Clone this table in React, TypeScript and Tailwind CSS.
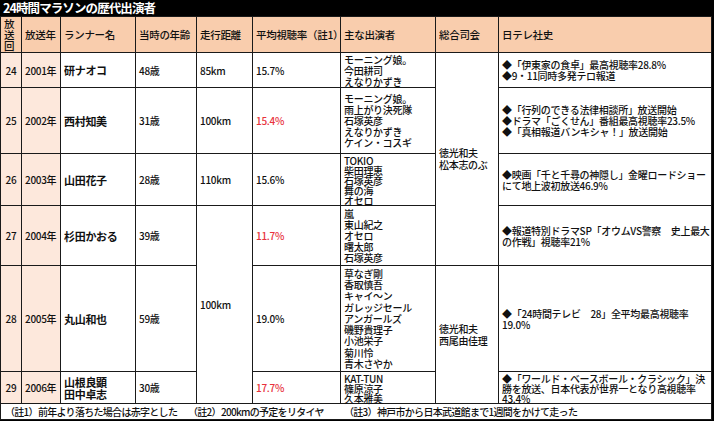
import React from "react";

type Row = {
  no: string;
  year: string;
  runner: string[];
  age: string;
  dist?: { text: string; span: number };
  rate: string;
  red?: boolean;
  cast: string[];
  castH: string;
  host?: { lines: string[]; span: number };
  hist: string[];
  h: string;
};

const rows: Row[] = [
  {
    no: "24",
    year: "2001年",
    runner: ["研ナオコ"],
    age: "48歳",
    dist: { text: "85km", span: 1 },
    rate: "15.7%",
    cast: ["モーニング娘。", "今田耕司", "えなりかずき"],
    castH: "h-[11px]",
    host: { lines: ["徳光和夫", "松本志のぶ"], span: 4 },
    hist: ["◆「伊東家の食卓」最高視聴率28.8%", "◆9・11同時多発テロ報道"],
    h: "h-[35px]",
  },
  {
    no: "25",
    year: "2002年",
    runner: ["西村知美"],
    age: "31歳",
    dist: { text: "100km", span: 1 },
    rate: "15.4%",
    red: true,
    cast: ["モーニング娘。", "雨上がり決死隊", "石塚英彦", "えなりかずき", "ケイン・コスギ"],
    castH: "h-[11px]",
    hist: [
      "◆「行列のできる法律相談所」放送開始",
      "◆ドラマ「ごくせん」番組最高視聴率23.5%",
      "◆「真相報道バンキシャ！」放送開始",
    ],
    h: "h-[66px]",
  },
  {
    no: "26",
    year: "2003年",
    runner: ["山田花子"],
    age: "28歳",
    dist: { text: "110km", span: 1 },
    rate: "15.6%",
    cast: ["TOKIO", "柴田理恵", "石塚英彦", "舞の海", "オセロ"],
    castH: "h-[10px]",
    hist: ["◆映画「千と千尋の神隠し」金曜ロードショー", "にて地上波初放送46.9%"],
    h: "h-[52px]",
  },
  {
    no: "27",
    year: "2004年",
    runner: ["杉田かおる"],
    age: "39歳",
    dist: { text: "100km", span: 3 },
    rate: "11.7%",
    red: true,
    cast: ["嵐", "東山紀之", "オセロ", "曙太郎", "石塚英彦"],
    castH: "h-[11px]",
    hist: ["◆報道特別ドラマSP「オウムVS警察　史上最大", "の作戦」視聴率21%"],
    h: "h-[60px]",
  },
  {
    no: "28",
    year: "2005年",
    runner: ["丸山和也"],
    age: "59歳",
    rate: "19.0%",
    cast: [
      "草なぎ剛",
      "香取慎吾",
      "キャイ〜ン",
      "ガレッジセール",
      "アンガールズ",
      "磯野貴理子",
      "小池栄子",
      "菊川怜",
      "青木さやか",
    ],
    castH: "h-[11.3px]",
    host: { lines: ["徳光和夫", "西尾由佳理"], span: 2 },
    hist: ["◆「24時間テレビ　28」全平均最高視聴率", "19.0%"],
    h: "h-[106px]",
  },
  {
    no: "29",
    year: "2006年",
    runner: ["山根良顕", "田中卓志"],
    age: "30歳",
    rate: "17.7%",
    red: true,
    cast: ["KAT-TUN", "篠原涼子", "久本雅美"],
    castH: "h-[10px]",
    hist: [
      "◆「ワールド・ベースボール・クラシック」決",
      "勝を放送、日本代表が世界一となり高視聴率",
      "43.4%",
    ],
    h: "h-[32px]",
  },
];

const cell = "border border-[#1a1a1a] px-[3px] py-0 align-middle whitespace-nowrap";
const head = "border border-[#1a1a1a] px-[3px] py-0 align-middle whitespace-nowrap font-medium text-left";

function Lines({ items, h }: { items: string[]; h: string }) {
  return (
    <>
      {items.map((t, i) => (
        <div key={i} className={h}>
          {t}
        </div>
      ))}
    </>
  );
}

export default function App() {
  return (
    <div className="w-[714px] h-[421px] overflow-hidden bg-black font-['Noto_Sans_CJK_JP',sans-serif] text-[#111]">
      <div className="flex h-[16px] items-center px-[3px] text-[12.5px] leading-[14px] font-bold text-white tracking-[-0.9px]">
        24時間マラソンの歴代出演者
      </div>
      <div className="pr-[2px] pb-[2px]">
        <table className="w-[712px] table-fixed border-collapse bg-white text-[10px] leading-[11px] tracking-[-0.3px] font-medium">
          <colgroup>
            <col className="w-[21px]" />
            <col className="w-[39px]" />
            <col className="w-[75px]" />
            <col className="w-[61px]" />
            <col className="w-[56px]" />
            <col className="w-[88px]" />
            <col className="w-[95px]" />
            <col className="w-[63px]" />
            <col />
          </colgroup>
          <thead>
            <tr className="h-[36px] bg-[#f9cdad] text-[10.5px] leading-[11px]">
              <th className={head + " text-center px-0"}>
                <div className="h-[11px]">放</div>
                <div className="h-[11px]">送</div>
                <div className="h-[11px]">回</div>
              </th>
              <th className={head}>放送年</th>
              <th className={head}>ランナー名</th>
              <th className={head}>当時の年齢</th>
              <th className={head}>走行距離</th>
              <th className={head}>平均視聴率（註1）</th>
              <th className={head}>主な出演者</th>
              <th className={head}>総合司会</th>
              <th className={head}>日テレ社史</th>
            </tr>
          </thead>
          <tbody>
            {rows.map((r) => (
              <tr key={r.no} className={r.h}>
                <td className={cell + " bg-[#fde8dc] text-center px-0"}>{r.no}</td>
                <td className={cell + " bg-[#fde8dc] px-[2px]"}>{r.year}</td>
                <td className={cell + " font-bold text-[11px] leading-[12px]"}>
                  {r.runner.map((t, i) => (
                    <div key={i} className="h-[12px]">
                      {t}
                    </div>
                  ))}
                </td>
                <td className={cell}>{r.age}</td>
                {r.dist && (
                  <td className={cell} rowSpan={r.dist.span}>
                    {r.dist.text}
                  </td>
                )}
                <td className={cell + (r.red ? " text-[#e8323c]" : "")}>{r.rate}</td>
                <td className={cell + " px-[2px]"}>
                  <Lines items={r.cast} h={r.castH} />
                </td>
                {r.host && (
                  <td className={cell} rowSpan={r.host.span}>
                    <Lines items={r.host.lines} h="h-[12px]" />
                  </td>
                )}
                <td className={cell}>
                  <Lines items={r.hist} h={r.no === "29" ? "h-[10px]" : "h-[11px]"} />
                </td>
              </tr>
            ))}
            <tr className="h-[16px]">
              <td colSpan={9} className="border border-[#1a1a1a] px-[4px] py-0 align-middle whitespace-nowrap">
                <div className="flex h-[14px] items-center tracking-[-0.7px]">
                  <span className="w-[183px] shrink-0">（註1）前年より落ちた場合は赤字とした</span>
                  <span className="w-[156px] shrink-0">（註2）200kmの予定をリタイヤ</span>
                  <span>（註3）神戸市から日本武道館まで1週間をかけて走った</span>
                </div>
              </td>
            </tr>
          </tbody>
        </table>
      </div>
    </div>
  );
}
